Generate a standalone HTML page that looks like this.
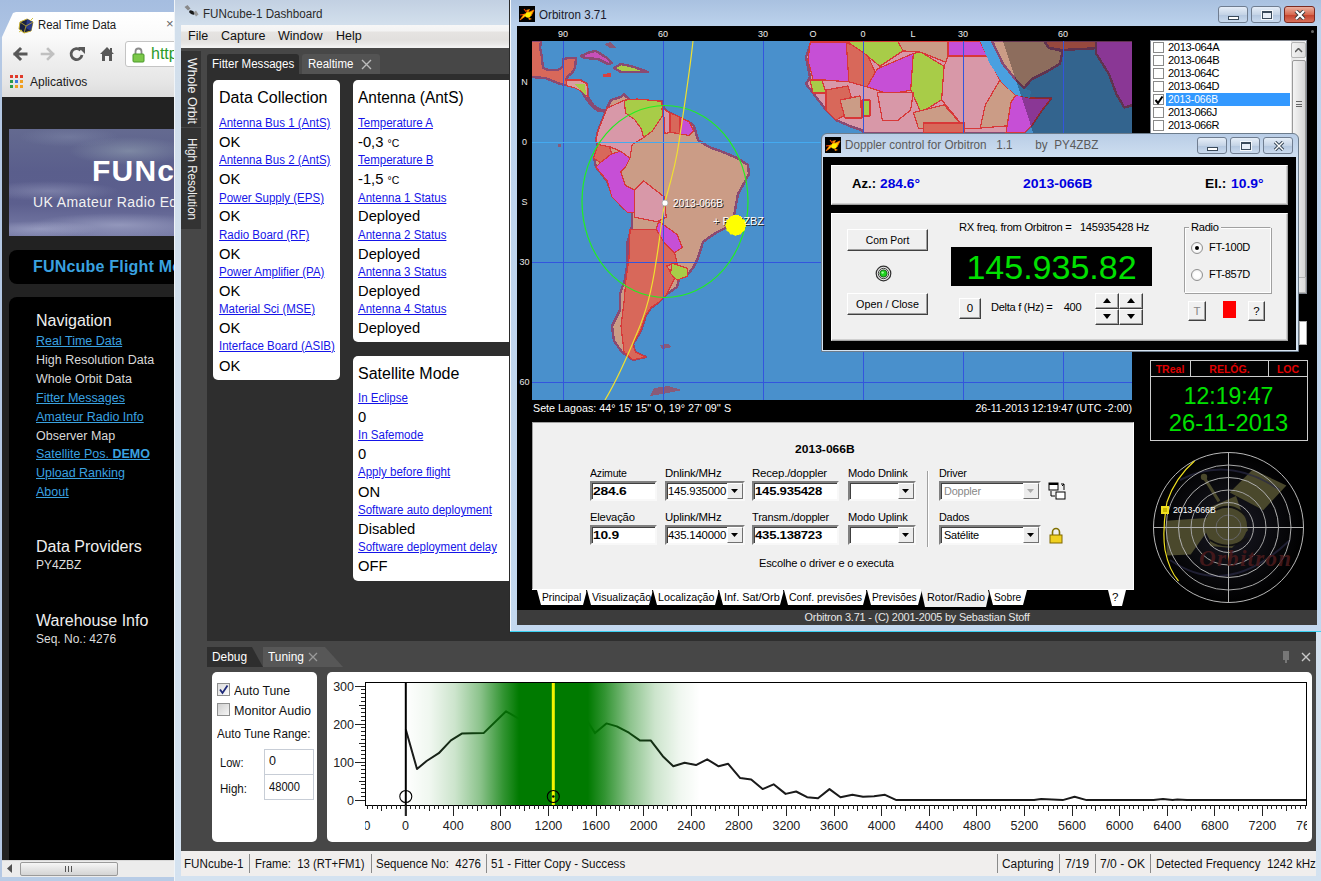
<!DOCTYPE html>
<html><head><meta charset="utf-8">
<style>
*{box-sizing:border-box;margin:0;padding:0}
html,body{width:1321px;height:881px;overflow:hidden;background:#a9c2e2;font-family:"Liberation Sans",sans-serif;position:relative}
.a{position:absolute}
.t{position:absolute;white-space:nowrap;line-height:1}
u{text-decoration:underline}
</style></head><body>

<!-- ============ CHROME ============ -->
<div class="a" style="left:0;top:0;width:174px;height:881px;background:linear-gradient(#a5bde0,#b4c9e6 60px,#c0d4ec)"></div>
<!-- tab + toolbar -->
<div class="a" style="left:2px;top:12px;width:172px;height:85px;background:linear-gradient(#ffffff 0,#fafafa 25px,#f0f0f0 45px,#e6e6e6 70px,#dcdcdc 85px);clip-path:polygon(0 25px,11px 1px,14px 0,100% 0,100% 100%,0 100%)"></div>
<div class="a" style="left:0;top:37px;width:2px;height:844px;background:#b4c8e4"></div>
<svg class="a" style="left:17px;top:16px" width="18" height="18"><polygon points="3,6 10,3 16,6 14,15 7,17 2,13" fill="#1a2240" stroke="#c8b030" stroke-width="1"/><polygon points="10,3 16,6 14,15 9,12" fill="#2a3a8a"/><path d="M3 6 L9 10 L16 6 M9 10 L7 17" stroke="#c8b030" stroke-width="0.8" fill="none"/><path d="M16 2 L13 5 M2 16 L5 14" stroke="#d0c040" stroke-width="1"/></svg>
<div class="t" style="left:38px;top:19px;font-size:12px;color:#1a1a1a;transform-origin:0 0;transform:scaleX(0.945)">Real Time Data</div>
<div class="t" style="left:166px;top:17px;font-size:13px;color:#666">×</div>
<svg class="a" style="left:11px;top:46px" width="17" height="16"><path d="M15 8 H4 M9 3 L4 8 L9 13" stroke="#585858" stroke-width="3" fill="none" stroke-linecap="square"/></svg>
<svg class="a" style="left:40px;top:46px" width="17" height="16"><path d="M2 8 H13 M8 3 L13 8 L8 13" stroke="#c0c0c0" stroke-width="2.6" fill="none" stroke-linecap="square"/></svg>
<svg class="a" style="left:69px;top:46px" width="17" height="17"><path d="M13 9 A5.5 5.5 0 1 1 11.5 4.2" stroke="#585858" stroke-width="2.8" fill="none"/><polygon points="9,1 16,1 16,8" fill="#585858"/></svg>
<svg class="a" style="left:99px;top:46px" width="16" height="16"><polygon points="8,1 15,8 13,8 13,15 10,15 10,10 6,10 6,15 3,15 3,8 1,8" fill="#585858"/><rect x="11" y="2" width="2" height="4" fill="#585858"/></svg>
<div class="a" style="left:125px;top:41px;width:60px;height:26px;background:#fff;border:1px solid #c4c4c4;border-radius:3px"></div>
<svg class="a" style="left:132px;top:46px" width="13" height="17"><path d="M3.5 8 V5.5 A3 3 0 0 1 9.5 5.5 V8" stroke="#8a8a8a" stroke-width="1.8" fill="none"/><rect x="1" y="8" width="11" height="8" rx="1" fill="#7cc84a" stroke="#4a9a2a" stroke-width="1"/></svg>
<div class="t" style="left:151px;top:46px;font-size:16px;color:#2a9a2a">http</div>
<svg class="a" style="left:10px;top:75px" width="14" height="14"><g><rect x="0" y="0" width="3" height="3" fill="#e03a2a"/><rect x="5" y="0" width="3" height="3" fill="#e03a2a"/><rect x="10" y="0" width="3" height="3" fill="#e03a2a"/><rect x="0" y="5" width="3" height="3" fill="#2a9a4a"/><rect x="5" y="5" width="3" height="3" fill="#3a7ae0"/><rect x="10" y="5" width="3" height="3" fill="#f0a020"/><rect x="0" y="10" width="3" height="3" fill="#2a9a4a"/><rect x="5" y="10" width="3" height="3" fill="#f0a020"/><rect x="10" y="10" width="3" height="3" fill="#f0a020"/></g></svg>
<div class="t" style="left:30px;top:76px;font-size:12px;color:#1a1a1a">Aplicativos</div>
<!-- content -->
<div class="a" style="left:2px;top:97px;width:172px;height:763px;background:#222"></div>
<div class="a" style="left:9px;top:129px;width:165px;height:107px;background:
 radial-gradient(ellipse 60px 14px at 120px 22px,rgba(150,165,180,0.55),transparent),
 radial-gradient(ellipse 50px 10px at 60px 8px,rgba(140,150,180,0.35),transparent),
 radial-gradient(ellipse 70px 10px at 40px 62px,rgba(170,175,205,0.4),transparent),
 radial-gradient(ellipse 90px 12px at 110px 96px,rgba(175,180,210,0.55),transparent),
 radial-gradient(ellipse 60px 8px at 30px 100px,rgba(180,185,215,0.5),transparent),
 linear-gradient(#646a90,#5a5e8c 40%,#5c5f8e 70%,#7a7ea8)"></div>
<div class="t" style="left:92px;top:156px;font-size:30px;font-weight:bold;color:#fff;letter-spacing:1.2px">FUNcube</div>
<div class="t" style="left:33px;top:195px;font-size:14px;color:#f2f2f2;letter-spacing:0.4px">UK Amateur Radio Educational</div>
<div class="a" style="left:9px;top:250px;width:175px;height:34px;background:#000;border-radius:8px"></div>
<div class="t" style="left:33px;top:259px;font-size:16px;font-weight:bold;color:#3aa2e0;letter-spacing:0.2px">FUNcube Flight Model</div>
<div class="a" style="left:9px;top:297px;width:175px;height:563px;background:#000;border-top-left-radius:8px"></div>
<div class="t" style="left:36px;top:313px;font-size:16px;color:#eee">Navigation</div>
<div style="position:absolute;left:36px;top:332px;font-size:12.5px;line-height:18.9px;color:#d8d8d8;white-space:nowrap">
  <div><u style="color:#3aa2e0">Real Time Data</u></div>
  <div>High Resolution Data</div>
  <div>Whole Orbit Data</div>
  <div><u style="color:#3aa2e0">Fitter Messages</u></div>
  <div><u style="color:#3aa2e0">Amateur Radio Info</u></div>
  <div>Observer Map</div>
  <div><u style="color:#3aa2e0">Satellite Pos. <b>DEMO</b></u></div>
  <div><u style="color:#3aa2e0">Upload Ranking</u></div>
  <div><u style="color:#3aa2e0">About</u></div>
</div>
<div class="t" style="left:36px;top:539px;font-size:16px;color:#eee">Data Providers</div>
<div class="t" style="left:36px;top:559px;font-size:12px;color:#ddd">PY4ZBZ</div>
<div class="t" style="left:36px;top:613px;font-size:16px;color:#eee">Warehouse Info</div>
<div class="t" style="left:36px;top:633px;font-size:12px;color:#ddd">Seq. No.: 4276</div>
<!-- scrollbar -->
<div class="a" style="left:2px;top:860px;width:172px;height:17px;background:#ececec;border-top:1px solid #d8d8d8"></div>
<svg class="a" style="left:7px;top:864px" width="6" height="9"><path d="M5 0 L0 4.5 L5 9 Z" fill="#505050"/></svg>
<div class="a" style="left:20px;top:862px;width:98px;height:14px;background:linear-gradient(#f6f6f6,#e4e4e4 50%,#d4d4d4);border:1px solid #9a9a9a;border-radius:2px"></div>
<div class="a" style="left:65px;top:866px;width:7px;height:6px;border-left:1px solid #555;border-right:1px solid #555"></div>
<div class="a" style="left:68px;top:866px;width:1px;height:6px;background:#555"></div>
<div class="a" style="left:0;top:877px;width:174px;height:4px;background:#b8cce6"></div>
<!-- ============ FUNCUBE ============ -->
<div class="a" id="fc" style="left:174px;top:0;width:1147px;height:881px;background:linear-gradient(#c2d0e2,#d2dfec 24px,#d4e2f0);border-left:1px solid #f0f4f8">
</div>
<div class="a" style="left:181px;top:25px;width:328px;height:23px;background:linear-gradient(#f7f7f7 0,#f3f3f3 6px,#e6e4e2 7px,#e2e0de 15px,#e8e7e6 19px,#f2f2f2 22px)"></div>
<div class="a" style="left:183px;top:5px;width:16px;height:14px">
 <svg width="16" height="14"><polygon points="1.5,2 4.5,0 7.5,3.5 5,5.5" fill="#888"/><ellipse cx="9" cy="7.5" rx="3.2" ry="1.8" transform="rotate(30 9 7.5)" fill="#1a1a1a"/><polygon points="10.5,7.5 13,5.5 15.5,9.5 13,11.5" fill="#999"/></svg>
</div>
<div class="t" style="left:203px;top:8px;font-size:12.5px;color:#2a2a2a;transform-origin:0 0;transform:scaleX(0.93)">FUNcube-1 Dashboard</div>
<div class="t" style="left:188px;top:30px;font-size:12.5px;color:#111">File</div>
<div class="t" style="left:221px;top:30px;font-size:12.5px;color:#111">Capture</div>
<div class="t" style="left:278px;top:30px;font-size:12.5px;color:#111">Window</div>
<div class="t" style="left:336px;top:30px;font-size:12.5px;color:#111">Help</div>
<!-- main dark -->
<div class="a" style="left:181px;top:48px;width:1135px;height:803px;background:#474747"></div>
<div class="a" style="left:207px;top:74px;width:1109px;height:567px;background:#2e2e2e"></div>
<div class="a" style="left:181px;top:51px;width:20px;height:76px;background:#333"></div>
<div class="a" style="left:181px;top:128px;width:20px;height:101px;background:#333"></div>
<div class="t" style="left:198px;top:58px;font-size:12.5px;color:#f0f0f0;transform-origin:0 0;transform:rotate(90deg)">Whole Orbit</div>
<div class="t" style="left:198px;top:138px;font-size:12.5px;color:#f0f0f0;transform-origin:0 0;transform:rotate(90deg) scaleX(0.93)">High Resolution</div>
<!-- doc tabs -->
<div class="a" style="left:207px;top:54px;width:92px;height:20px;background:#2e2e2e;border-radius:3px 3px 0 0"></div>
<div class="a" style="left:302px;top:54px;width:78px;height:20px;background:#535353;border-radius:3px 3px 0 0"></div>
<div class="t" style="left:212px;top:58px;font-size:12.5px;color:#fff;transform-origin:0 0;transform:scaleX(0.925)">Fitter Messages</div>
<div class="t" style="left:308px;top:58px;font-size:12.5px;color:#fff;transform-origin:0 0;transform:scaleX(0.92)">Realtime</div>
<svg class="a" style="left:361px;top:59px" width="11" height="11"><path d="M1 1 L10 10 M10 1 L1 10" stroke="#bbb" stroke-width="1.4"/></svg>
<!-- cards -->
<div class="a" style="left:213px;top:80px;width:127px;height:300px;background:#fff;border-radius:5px"></div>
<div class="a" style="left:353px;top:80px;width:156px;height:262px;background:#fff;border-radius:5px 0 0 5px"></div>
<div class="a" style="left:353px;top:356px;width:156px;height:225px;background:#fff;border-radius:5px 0 0 5px"></div>
<div class="t" style="left:219px;top:90px;font-size:16px;color:#000;">Data Collection</div>
<div class="t" style="left:358px;top:90px;font-size:16px;color:#000;transform-origin:0 0;transform:scaleX(0.965)">Antenna (AntS)</div>
<div class="t" style="left:358px;top:366px;font-size:16px;color:#000;">Satellite Mode</div>
<div class="t" style="left:219px;top:117px;font-size:12px;color:#1515e8;transform-origin:0 0;transform:scaleX(0.96)"><u>Antenna Bus 1 (AntS)</u></div>
<div class="t" style="left:219px;top:134px;font-size:15.5px;color:#000;transform-origin:0 0;transform:scaleX(0.95)">OK</div>
<div class="t" style="left:219px;top:154px;font-size:12px;color:#1515e8;transform-origin:0 0;transform:scaleX(0.96)"><u>Antenna Bus 2 (AntS)</u></div>
<div class="t" style="left:219px;top:171px;font-size:15.5px;color:#000;transform-origin:0 0;transform:scaleX(0.95)">OK</div>
<div class="t" style="left:219px;top:192px;font-size:12px;color:#1515e8;transform-origin:0 0;transform:scaleX(0.96)"><u>Power Supply (EPS)</u></div>
<div class="t" style="left:219px;top:208px;font-size:15.5px;color:#000;transform-origin:0 0;transform:scaleX(0.95)">OK</div>
<div class="t" style="left:219px;top:229px;font-size:12px;color:#1515e8;transform-origin:0 0;transform:scaleX(0.96)"><u>Radio Board (RF)</u></div>
<div class="t" style="left:219px;top:246px;font-size:15.5px;color:#000;transform-origin:0 0;transform:scaleX(0.95)">OK</div>
<div class="t" style="left:219px;top:266px;font-size:12px;color:#1515e8;transform-origin:0 0;transform:scaleX(0.96)"><u>Power Amplifier (PA)</u></div>
<div class="t" style="left:219px;top:283px;font-size:15.5px;color:#000;transform-origin:0 0;transform:scaleX(0.95)">OK</div>
<div class="t" style="left:219px;top:303px;font-size:12px;color:#1515e8;transform-origin:0 0;transform:scaleX(0.96)"><u>Material Sci (MSE)</u></div>
<div class="t" style="left:219px;top:320px;font-size:15.5px;color:#000;transform-origin:0 0;transform:scaleX(0.95)">OK</div>
<div class="t" style="left:219px;top:340px;font-size:12px;color:#1515e8;transform-origin:0 0;transform:scaleX(0.96)"><u>Interface Board (ASIB)</u></div>
<div class="t" style="left:219px;top:358px;font-size:15.5px;color:#000;transform-origin:0 0;transform:scaleX(0.95)">OK</div>
<div class="t" style="left:358px;top:117px;font-size:12px;color:#1515e8;transform-origin:0 0;transform:scaleX(0.96)"><u>Temperature A</u></div>
<div class="t" style="left:358px;top:134px;font-size:15.5px;color:#000;transform-origin:0 0;transform:scaleX(0.95)">-0,3 <span style='font-size:11px'>°C</span></div>
<div class="t" style="left:358px;top:154px;font-size:12px;color:#1515e8;transform-origin:0 0;transform:scaleX(0.96)"><u>Temperature B</u></div>
<div class="t" style="left:358px;top:171px;font-size:15.5px;color:#000;transform-origin:0 0;transform:scaleX(0.95)">-1,5 <span style='font-size:11px'>°C</span></div>
<div class="t" style="left:358px;top:192px;font-size:12px;color:#1515e8;transform-origin:0 0;transform:scaleX(0.96)"><u>Antenna 1 Status</u></div>
<div class="t" style="left:358px;top:208px;font-size:15.5px;color:#000;transform-origin:0 0;transform:scaleX(0.95)">Deployed</div>
<div class="t" style="left:358px;top:229px;font-size:12px;color:#1515e8;transform-origin:0 0;transform:scaleX(0.96)"><u>Antenna 2 Status</u></div>
<div class="t" style="left:358px;top:246px;font-size:15.5px;color:#000;transform-origin:0 0;transform:scaleX(0.95)">Deployed</div>
<div class="t" style="left:358px;top:266px;font-size:12px;color:#1515e8;transform-origin:0 0;transform:scaleX(0.96)"><u>Antenna 3 Status</u></div>
<div class="t" style="left:358px;top:283px;font-size:15.5px;color:#000;transform-origin:0 0;transform:scaleX(0.95)">Deployed</div>
<div class="t" style="left:358px;top:303px;font-size:12px;color:#1515e8;transform-origin:0 0;transform:scaleX(0.96)"><u>Antenna 4 Status</u></div>
<div class="t" style="left:358px;top:320px;font-size:15.5px;color:#000;transform-origin:0 0;transform:scaleX(0.95)">Deployed</div>
<div class="t" style="left:358px;top:392px;font-size:12px;color:#1515e8;transform-origin:0 0;transform:scaleX(0.96)"><u>In Eclipse</u></div>
<div class="t" style="left:358px;top:409px;font-size:15.5px;color:#000;transform-origin:0 0;transform:scaleX(0.95)">0</div>
<div class="t" style="left:358px;top:429px;font-size:12px;color:#1515e8;transform-origin:0 0;transform:scaleX(0.96)"><u>In Safemode</u></div>
<div class="t" style="left:358px;top:446px;font-size:15.5px;color:#000;transform-origin:0 0;transform:scaleX(0.95)">0</div>
<div class="t" style="left:358px;top:466px;font-size:12px;color:#1515e8;transform-origin:0 0;transform:scaleX(0.96)"><u>Apply before flight</u></div>
<div class="t" style="left:358px;top:484px;font-size:15.5px;color:#000;transform-origin:0 0;transform:scaleX(0.95)">ON</div>
<div class="t" style="left:358px;top:504px;font-size:12px;color:#1515e8;transform-origin:0 0;transform:scaleX(0.96)"><u>Software auto deployment</u></div>
<div class="t" style="left:358px;top:521px;font-size:15.5px;color:#000;transform-origin:0 0;transform:scaleX(0.95)">Disabled</div>
<div class="t" style="left:358px;top:541px;font-size:12px;color:#1515e8;transform-origin:0 0;transform:scaleX(0.96)"><u>Software deployment delay</u></div>
<div class="t" style="left:358px;top:558px;font-size:15.5px;color:#000;transform-origin:0 0;transform:scaleX(0.95)">OFF</div>
<!-- tuning panel -->

<div class="a" style="left:207px;top:647px;width:56px;height:20px;background:#2e2e2e;clip-path:polygon(0 0,45px 0,100% 100%,0 100%)"></div>
<div class="a" style="left:263px;top:647px;width:80px;height:20px;background:#575757;clip-path:polygon(0 0,62px 0,100% 100%,0 100%)"></div>
<div class="t" style="left:212px;top:651px;font-size:12.5px;color:#fff;transform-origin:0 0;transform:scaleX(0.950)">Debug</div>
<div class="t" style="left:268px;top:651px;font-size:12.5px;color:#fff;transform-origin:0 0;transform:scaleX(0.953)">Tuning</div>
<svg class="a" style="left:308px;top:652px" width="10" height="10"><path d="M1 1 L9 9 M9 1 L1 9" stroke="#9a9a9a" stroke-width="1.3"/></svg>
<div class="a" style="left:1283px;top:651px;width:6px;height:9px;background:#777"></div>
<div class="a" style="left:1285px;top:659px;width:2px;height:4px;background:#777"></div>
<svg class="a" style="left:1301px;top:652px" width="10" height="10"><path d="M1 1 L9 9 M9 1 L1 9" stroke="#c8c8c8" stroke-width="1.4"/></svg>
<div class="a" style="left:212px;top:672px;width:105px;height:170px;background:#fff;border-radius:5px"></div>
<div class="a" style="left:327px;top:672px;width:985px;height:170px;background:#fff;border-radius:5px"></div>
<div class="a" style="left:217px;top:683px;width:13px;height:13px;border:1px solid #8e8f8f;background:linear-gradient(135deg,#dcdcdc,#fafafa)"><svg width="11" height="11" style="position:absolute;left:0;top:0"><path d="M2 5.5 L4.5 9 L9.5 1.5" stroke="#1e2a7a" stroke-width="1.8" fill="none"/></svg></div>
<div class="a" style="left:217px;top:703px;width:13px;height:13px;border:1px solid #8e8f8f;background:linear-gradient(135deg,#cfcfcf,#f6f6f6)"></div>
<div class="t" style="left:234px;top:685px;font-size:12.5px;color:#111;transform-origin:0 0;transform:scaleX(0.982)">Auto Tune</div>
<div class="t" style="left:234px;top:705px;font-size:12.5px;color:#111;transform-origin:0 0;transform:scaleX(1.007)">Monitor Audio</div>
<div class="t" style="left:217px;top:728px;font-size:12.5px;color:#111;transform-origin:0 0;transform:scaleX(0.928)">Auto Tune Range:</div>
<div class="t" style="left:220px;top:757px;font-size:12.5px;color:#111;transform-origin:0 0;transform:scaleX(0.890)">Low:</div>
<div class="t" style="left:220px;top:783px;font-size:12.5px;color:#111;transform-origin:0 0;transform:scaleX(0.925)">High:</div>
<div class="a" style="left:264px;top:749px;width:50px;height:26px;border:1px solid #c7cdd6;background:#fff"></div>
<div class="a" style="left:264px;top:774px;width:50px;height:26px;border:1px solid #c7cdd6;background:#fff"></div>
<div class="t" style="left:269px;top:755px;font-size:12.5px;color:#111;">0</div>
<div class="t" style="left:269px;top:781px;font-size:12.5px;color:#111;transform-origin:0 0;transform:scaleX(0.892)">48000</div>
<!--CHART-->
<svg class="a" style="left:326px;top:672px" width="986" height="170" viewBox="326 672 986 170">
<defs><linearGradient id="gg" gradientUnits="userSpaceOnUse" x1="405" y1="0" x2="700" y2="0">
<stop offset="0.0000" stop-color="#007a00" stop-opacity="0"/>
<stop offset="0.0847" stop-color="#007a00" stop-opacity="0.06"/>
<stop offset="0.1695" stop-color="#007a00" stop-opacity="0.2"/>
<stop offset="0.2542" stop-color="#007a00" stop-opacity="0.45"/>
<stop offset="0.3322" stop-color="#007a00" stop-opacity="0.8"/>
<stop offset="0.3864" stop-color="#007a00" stop-opacity="1"/>
<stop offset="0.6203" stop-color="#007a00" stop-opacity="1"/>
<stop offset="0.6780" stop-color="#007a00" stop-opacity="0.8"/>
<stop offset="0.7627" stop-color="#007a00" stop-opacity="0.45"/>
<stop offset="0.8475" stop-color="#007a00" stop-opacity="0.2"/>
<stop offset="0.9322" stop-color="#007a00" stop-opacity="0.06"/>
<stop offset="1.0000" stop-color="#007a00" stop-opacity="0"/>
</linearGradient><clipPath id="pc"><rect x="366" y="683" width="940" height="122"/></clipPath></defs>
<rect x="365.5" y="682.5" width="941" height="123" fill="#fff" stroke="#000" stroke-width="1"/>
<g clip-path="url(#pc)">
<polyline points="405.8,729.5 417,769 426.6,761 438.8,753.2 450.9,740.4 461.8,733.6 483.6,733.1 506.1,711.3 518.7,718.6 530,722 541,728 553,725 565,715 576,712 586.5,719.8 595,733.1 606.4,723.4 616.8,726.4 628.9,732.7 639.8,740.4 650.7,740.4 662.8,756.2 673.3,766.3 684.6,762.7 696,765.1 707.2,759.3 718.6,766.3 728.2,763.8 740.2,778.1 751.2,779.5 762.6,789.1 773.6,784.3 785.6,793.9 796.1,791.5 807.1,797.2 818,798.2 829.5,789.1 840.5,797.2 852.4,794.8 863,796.7 874,796.3 885,794.8 896.4,800.1 1034,800.1 1041.2,799.1 1062.7,800.1 1074.6,796.7 1086.6,800.1 1153.5,800.1 1163,799.1 1172.6,800.1 1177.4,799.6 1187,800.1 1306,800.1" fill="none" stroke="#1a1a1a" stroke-width="2" stroke-linejoin="round"/>
<rect x="405" y="683" width="295" height="122" fill="url(#gg)"/>
<line x1="405.8" y1="683" x2="405.8" y2="805" stroke="#000" stroke-width="2"/>
<line x1="553.3" y1="683" x2="553.3" y2="805" stroke="#f4f400" stroke-width="3"/>
<circle cx="405.8" cy="796.5" r="6" fill="none" stroke="#000" stroke-width="1.1"/>
<circle cx="553.3" cy="796.5" r="6" fill="none" stroke="#000" stroke-width="1.1"/>
<circle cx="553.3" cy="796.5" r="1.3" fill="#000"/>
</g>
<line x1="405.8" y1="805" x2="405.8" y2="816" stroke="#000" stroke-width="2"/>
<path d="M355 800.0H365 M361 796.2H365 M361 792.4H365 M361 788.6H365 M361 784.8H365 M359 781.0H365 M361 777.2H365 M361 773.4H365 M361 769.6H365 M361 765.8H365 M355 762.0H365 M361 758.2H365 M361 754.4H365 M361 750.6H365 M361 746.8H365 M359 743.0H365 M361 739.2H365 M361 735.4H365 M361 731.6H365 M361 727.8H365 M355 724.0H365 M361 720.2H365 M361 716.4H365 M361 712.6H365 M361 708.8H365 M359 705.0H365 M361 701.2H365 M361 697.4H365 M361 693.6H365 M361 689.8H365 M355 686.0H365 M367.5 805V809 M372.3 805V809 M377.0 805V809 M381.8 805V811 M386.6 805V809 M391.3 805V809 M396.1 805V809 M400.8 805V809 M405.6 805V816 M410.4 805V809 M415.1 805V809 M419.9 805V809 M424.6 805V809 M429.4 805V811 M434.2 805V809 M438.9 805V809 M443.7 805V809 M448.4 805V809 M453.2 805V816 M458.0 805V809 M462.7 805V809 M467.5 805V809 M472.2 805V809 M477.0 805V811 M481.8 805V809 M486.5 805V809 M491.3 805V809 M496.0 805V809 M500.8 805V816 M505.6 805V809 M510.3 805V809 M515.1 805V809 M519.8 805V809 M524.6 805V811 M529.4 805V809 M534.1 805V809 M538.9 805V809 M543.6 805V809 M548.4 805V816 M553.2 805V809 M557.9 805V809 M562.7 805V809 M567.4 805V809 M572.2 805V811 M577.0 805V809 M581.7 805V809 M586.5 805V809 M591.2 805V809 M596.0 805V816 M600.8 805V809 M605.5 805V809 M610.3 805V809 M615.0 805V809 M619.8 805V811 M624.6 805V809 M629.3 805V809 M634.1 805V809 M638.8 805V809 M643.6 805V816 M648.4 805V809 M653.1 805V809 M657.9 805V809 M662.6 805V809 M667.4 805V811 M672.2 805V809 M676.9 805V809 M681.7 805V809 M686.4 805V809 M691.2 805V816 M696.0 805V809 M700.7 805V809 M705.5 805V809 M710.2 805V809 M715.0 805V811 M719.8 805V809 M724.5 805V809 M729.3 805V809 M734.0 805V809 M738.8 805V816 M743.6 805V809 M748.3 805V809 M753.1 805V809 M757.8 805V809 M762.6 805V811 M767.4 805V809 M772.1 805V809 M776.9 805V809 M781.6 805V809 M786.4 805V816 M791.2 805V809 M795.9 805V809 M800.7 805V809 M805.4 805V809 M810.2 805V811 M815.0 805V809 M819.7 805V809 M824.5 805V809 M829.2 805V809 M834.0 805V816 M838.8 805V809 M843.5 805V809 M848.3 805V809 M853.0 805V809 M857.8 805V811 M862.6 805V809 M867.3 805V809 M872.1 805V809 M876.8 805V809 M881.6 805V816 M886.4 805V809 M891.1 805V809 M895.9 805V809 M900.6 805V809 M905.4 805V811 M910.2 805V809 M914.9 805V809 M919.7 805V809 M924.4 805V809 M929.2 805V816 M934.0 805V809 M938.7 805V809 M943.5 805V809 M948.2 805V809 M953.0 805V811 M957.8 805V809 M962.5 805V809 M967.3 805V809 M972.0 805V809 M976.8 805V816 M981.6 805V809 M986.3 805V809 M991.1 805V809 M995.8 805V809 M1000.6 805V811 M1005.4 805V809 M1010.1 805V809 M1014.9 805V809 M1019.6 805V809 M1024.4 805V816 M1029.2 805V809 M1033.9 805V809 M1038.7 805V809 M1043.4 805V809 M1048.2 805V811 M1053.0 805V809 M1057.7 805V809 M1062.5 805V809 M1067.2 805V809 M1072.0 805V816 M1076.8 805V809 M1081.5 805V809 M1086.3 805V809 M1091.0 805V809 M1095.8 805V811 M1100.6 805V809 M1105.3 805V809 M1110.1 805V809 M1114.8 805V809 M1119.6 805V816 M1124.4 805V809 M1129.1 805V809 M1133.9 805V809 M1138.6 805V809 M1143.4 805V811 M1148.2 805V809 M1152.9 805V809 M1157.7 805V809 M1162.4 805V809 M1167.2 805V816 M1172.0 805V809 M1176.7 805V809 M1181.5 805V809 M1186.2 805V809 M1191.0 805V811 M1195.8 805V809 M1200.5 805V809 M1205.3 805V809 M1210.0 805V809 M1214.8 805V816 M1219.6 805V809 M1224.3 805V809 M1229.1 805V809 M1233.8 805V809 M1238.6 805V811 M1243.4 805V809 M1248.1 805V809 M1252.9 805V809 M1257.6 805V809 M1262.4 805V816 M1267.2 805V809 M1271.9 805V809 M1276.7 805V809 M1281.4 805V809 M1286.2 805V811 M1291.0 805V809 M1295.7 805V809 M1300.5 805V809 M1305.2 805V809" stroke="#222" stroke-width="1" shape-rendering="crispEdges"/>
</svg>
<div class="t" style="left:323px;top:681px;width:31px;text-align:right;font-size:12.5px;color:#222">300</div>
<div class="t" style="left:323px;top:719px;width:31px;text-align:right;font-size:12.5px;color:#222">200</div>
<div class="t" style="left:323px;top:757px;width:31px;text-align:right;font-size:12.5px;color:#222">100</div>
<div class="t" style="left:323px;top:795px;width:31px;text-align:right;font-size:12.5px;color:#222">0</div>
<div class="a" style="left:365px;top:814px;width:942px;height:22px;overflow:hidden">
<div class="t" style="left:-32.0px;top:6px;width:50px;text-align:center;font-size:12.5px;color:#222">-400</div>
<div class="t" style="left:15.6px;top:6px;width:50px;text-align:center;font-size:12.5px;color:#222">0</div>
<div class="t" style="left:63.2px;top:6px;width:50px;text-align:center;font-size:12.5px;color:#222">400</div>
<div class="t" style="left:110.8px;top:6px;width:50px;text-align:center;font-size:12.5px;color:#222">800</div>
<div class="t" style="left:158.4px;top:6px;width:50px;text-align:center;font-size:12.5px;color:#222">1200</div>
<div class="t" style="left:206.0px;top:6px;width:50px;text-align:center;font-size:12.5px;color:#222">1600</div>
<div class="t" style="left:253.6px;top:6px;width:50px;text-align:center;font-size:12.5px;color:#222">2000</div>
<div class="t" style="left:301.2px;top:6px;width:50px;text-align:center;font-size:12.5px;color:#222">2400</div>
<div class="t" style="left:348.8px;top:6px;width:50px;text-align:center;font-size:12.5px;color:#222">2800</div>
<div class="t" style="left:396.4px;top:6px;width:50px;text-align:center;font-size:12.5px;color:#222">3200</div>
<div class="t" style="left:444.0px;top:6px;width:50px;text-align:center;font-size:12.5px;color:#222">3600</div>
<div class="t" style="left:491.6px;top:6px;width:50px;text-align:center;font-size:12.5px;color:#222">4000</div>
<div class="t" style="left:539.2px;top:6px;width:50px;text-align:center;font-size:12.5px;color:#222">4400</div>
<div class="t" style="left:586.8px;top:6px;width:50px;text-align:center;font-size:12.5px;color:#222">4800</div>
<div class="t" style="left:634.4px;top:6px;width:50px;text-align:center;font-size:12.5px;color:#222">5200</div>
<div class="t" style="left:682.0px;top:6px;width:50px;text-align:center;font-size:12.5px;color:#222">5600</div>
<div class="t" style="left:729.6px;top:6px;width:50px;text-align:center;font-size:12.5px;color:#222">6000</div>
<div class="t" style="left:777.2px;top:6px;width:50px;text-align:center;font-size:12.5px;color:#222">6400</div>
<div class="t" style="left:824.8px;top:6px;width:50px;text-align:center;font-size:12.5px;color:#222">6800</div>
<div class="t" style="left:872.4px;top:6px;width:50px;text-align:center;font-size:12.5px;color:#222">7200</div>
<div class="t" style="left:920.0px;top:6px;width:50px;text-align:center;font-size:12.5px;color:#222">7600</div>
</div>
<!--/CHART-->
<!-- status bar -->
<div class="a" style="left:181px;top:851px;width:1135px;height:25px;background:#f0eeed"></div>
<div class="t" style="left:184px;top:858px;font-size:12.5px;color:#111;transform-origin:0 0;transform:scaleX(0.932)">FUNcube-1</div>
<div class="t" style="left:255px;top:858px;font-size:12.5px;color:#111;transform-origin:0 0;transform:scaleX(0.906)">Frame:&nbsp; 13 (RT+FM1)</div>
<div class="t" style="left:376px;top:858px;font-size:12.5px;color:#111;transform-origin:0 0;transform:scaleX(0.921)">Sequence No:&nbsp; 4276</div>
<div class="t" style="left:491px;top:858px;font-size:12.5px;color:#111;transform-origin:0 0;transform:scaleX(0.929)">51 - Fitter Copy - Success</div>
<div class="t" style="left:1002px;top:858px;font-size:12.5px;color:#111;transform-origin:0 0;transform:scaleX(0.950)">Capturing</div>
<div class="t" style="left:1065px;top:858px;font-size:12.5px;color:#111;transform-origin:0 0;transform:scaleX(0.986)">7/19</div>
<div class="t" style="left:1100px;top:858px;font-size:12.5px;color:#111;transform-origin:0 0;transform:scaleX(0.967)">7/0 - OK</div>
<div class="t" style="left:1156px;top:858px;font-size:12.5px;color:#111;transform-origin:0 0;transform:scaleX(0.928)">Detected Frequency&nbsp; 1242 kHz</div>
<div class="a" style="left:249px;top:854px;width:1px;height:19px;background:#8a8a8a"></div>
<div class="a" style="left:371px;top:854px;width:1px;height:19px;background:#8a8a8a"></div>
<div class="a" style="left:486px;top:854px;width:1px;height:19px;background:#8a8a8a"></div>
<div class="a" style="left:997px;top:854px;width:1px;height:19px;background:#8a8a8a"></div>
<div class="a" style="left:1059px;top:854px;width:1px;height:19px;background:#8a8a8a"></div>
<div class="a" style="left:1095px;top:854px;width:1px;height:19px;background:#8a8a8a"></div>
<div class="a" style="left:1150px;top:854px;width:1px;height:19px;background:#8a8a8a"></div>

<!-- ============ ORBITRON ============ -->
<!--ORB-->
<div class="a" id="orb" style="left:510px;top:0;width:811px;height:632px;background:linear-gradient(#a9c1e0,#bcd2ec 26px,#c3d8ef)"></div><div class="a" style="left:509px;top:0;width:1px;height:633px;background:#2a2a2a"></div><div class="a" style="left:510px;top:0;width:1px;height:632px;background:#f4f8fc"></div>
<div class="a" style="left:519px;top:6px;width:16px;height:16px;background:#000"><svg width="16" height="16"><path d="M5 3 L9 8 M1 9 L8 8" stroke="#ff4400" stroke-width="1.2"/><polygon points="8,7 15,4 12,10" fill="#ffcc00" stroke="#ff6600" stroke-width="0.8"/><polygon points="8,9 1,14 5,8" fill="#ffdd00" stroke="#ff6600" stroke-width="0.8"/><polygon points="7,4 11,3 9,7" fill="#ff8800"/><circle cx="9" cy="9" r="2.8" fill="#ffee00"/><polygon points="9,11 13,13 10,14" fill="#ff8800"/></svg></div>
<div class="t" style="left:539px;top:9px;font-size:12.5px;color:#1a1a2a;transform-origin:0 0;transform:scaleX(0.929)">Orbitron 3.71</div>
<div class="a" style="left:1218px;top:6px;width:30px;height:17px;border:1px solid #6f7d90;border-radius:3px;background:linear-gradient(#e6eef8,#c5d4e6 50%,#b3c6de 51%,#c9daee)"><div class="a" style="left:9px;top:9px;width:11px;height:4px;background:#fff;border:1px solid #3a4a5a"></div></div>
<div class="a" style="left:1251px;top:6px;width:30px;height:17px;border:1px solid #6f7d90;border-radius:3px;background:linear-gradient(#e6eef8,#c5d4e6 50%,#b3c6de 51%,#c9daee)"><div class="a" style="left:10px;top:4px;width:10px;height:8px;border:1.5px solid #3a4a5a;border-top-width:2.5px;background:#e8eef6;box-shadow:0 0 0 1px #f4f8fc"></div></div>
<div class="a" style="left:1284px;top:6px;width:31px;height:17px;border:1px solid #7a2a20;border-radius:3px;background:linear-gradient(#eab0a0,#d86a50 50%,#c3402a 51%,#d8705a)"><svg class="a" style="left:8px;top:3px" width="14" height="10"><path d="M3 1 L11 9 M11 1 L3 9" stroke="#3a3a3a" stroke-width="4"/><path d="M3 1 L11 9 M11 1 L3 9" stroke="#fff" stroke-width="2.2"/></svg></div>
<div class="a" style="left:517px;top:26px;width:800px;height:599px;background:#000"></div><div class="a" style="left:510px;top:631px;width:811px;height:1px;background:#3ad0f0"></div>
<svg class="a" style="left:532px;top:41px" width="600" height="359" viewBox="532 41 600 359" shape-rendering="crispEdges">
<rect x="532" y="41" width="600" height="359" fill="#4990cc"/>
<polygon points="531.0,41.0 541.0,41.0 540.0,48.0 541.5,54.5 543.0,68.0 548.0,70.0 558.0,70.0 563.0,66.6 563.0,59.4 567.5,58.0 576.0,58.0 575.0,68.0 572.0,73.0 568.0,76.0 566.0,80.0 580.0,80.0 587.0,84.0 588.0,97.0 594.0,106.0 605.0,112.0 608.0,107.0 611.0,100.0 607.0,110.0 598.0,111.0 591.0,105.0 585.0,97.0 581.0,90.0 572.0,86.0 560.0,84.0 545.0,78.0 531.0,77.0" fill="#d8685a" stroke="#8a4a72" stroke-width="2.4" stroke-linejoin="round"/>
<polygon points="566.0,80.0 580.0,80.0 587.0,84.0 588.0,97.0 583.0,92.0 575.0,88.0 567.0,86.0" fill="#d8a0a0" stroke="#d83838" stroke-width="1.2" stroke-linejoin="round"/>
<polygon points="575.0,84.0 585.0,84.0 586.0,96.0 580.0,90.0" fill="#a8cc48"/>
<polygon points="581.0,56.0 590.0,52.0 596.0,51.0 607.0,58.0 612.0,63.0 608.0,64.0 598.0,59.0 585.0,58.0" fill="#c850b8" stroke="#8a4a72" stroke-width="2.4" stroke-linejoin="round"/>
<polygon points="614.0,68.0 621.0,64.0 634.0,67.0 648.0,72.0 637.0,72.0 621.0,72.0" fill="#a8cc48" stroke="#8a4a72" stroke-width="2.4" stroke-linejoin="round"/>
<polygon points="604.0,44.0 610.0,42.0 616.0,48.0 610.0,48.0" fill="#8a5a78"/>
<polygon points="603.0,74.0 611.0,73.0 611.0,77.0 603.0,77.0" fill="#d84040"/>
<polygon points="607.0,108.0 611.0,100.0 621.0,97.0 624.0,94.5 630.0,100.0 648.0,101.0 662.0,101.0 665.0,110.0 678.0,117.0 689.0,122.0 694.0,126.0 698.0,140.0 709.0,147.0 723.0,152.0 737.0,158.0 748.0,165.0 749.0,174.0 743.0,185.0 738.0,194.0 736.0,205.0 734.0,216.0 727.0,227.0 714.0,234.0 703.0,242.0 698.0,258.0 693.0,268.0 688.0,274.0 680.0,276.0 677.0,287.0 667.0,294.0 659.0,302.0 651.0,308.0 646.0,315.0 641.0,331.0 633.0,344.0 635.0,352.0 646.0,357.0 633.0,360.0 622.0,352.0 614.0,341.0 612.0,326.0 620.0,310.0 620.0,294.0 625.0,279.0 627.5,263.0 627.5,242.0 632.0,226.0 632.0,212.0 623.0,208.0 612.0,194.0 607.0,181.0 596.0,167.0 594.0,158.0 598.0,147.0 596.0,140.0 598.0,131.0" fill="#cb9c86" stroke="#8a4a72" stroke-width="2.4" stroke-linejoin="round"/>
<polygon points="624.3,100.2 636.7,99.0 661.7,101.3 662.9,115.0 652.6,130.8 643.6,137.7 641.3,128.6 634.5,119.5 625.4,112.7" fill="#a8cc48" stroke="#d83838" stroke-width="1.2" stroke-linejoin="round"/>
<polygon points="607.2,108.1 624.3,100.2 625.4,112.7 634.5,119.5 641.3,128.6 643.6,137.7 632.2,144.5 629.9,158.1 620.8,151.3 609.5,146.7 598.1,144.5 595.9,139.9 598.1,130.8" fill="#d898a8" stroke="#d83838" stroke-width="1.2" stroke-linejoin="round"/>
<polygon points="598.0,144.5 609.5,146.7 611.8,153.6 600.4,162.6 593.6,158.1" fill="#d8685a" stroke="#d83838" stroke-width="1.2" stroke-linejoin="round"/>
<polygon points="600.4,162.6 611.8,153.6 620.8,151.3 629.9,158.1 625.4,167.2 620.8,171.7 625.4,185.4 634.5,189.9 634.5,212.6 627.7,212.6 611.8,196.7 607.2,180.8 595.9,167.2" fill="#c64fd6" stroke="#d83838" stroke-width="1.2" stroke-linejoin="round"/>
<polygon points="634.5,189.9 643.6,180.8 664.0,196.7 666.3,217.2 657.2,221.7 634.5,217.2" fill="#d898a8" stroke="#d83838" stroke-width="1.2" stroke-linejoin="round"/>
<polygon points="661.7,108.1 670.0,113.0 670.0,132.0 665.0,134.0 664.0,117.0" fill="#d898a8" stroke="#d83838" stroke-width="1.2" stroke-linejoin="round"/>
<polygon points="670.0,113.0 680.0,117.0 680.0,134.0 670.0,132.0" fill="#d8685a" stroke="#d83838" stroke-width="1.2" stroke-linejoin="round"/>
<polygon points="680.0,117.0 689.0,121.8 693.5,130.8 689.0,135.4 680.0,134.0" fill="#c64fd6" stroke="#d83838" stroke-width="1.2" stroke-linejoin="round"/>
<polygon points="658.8,221.3 677.1,234.4 682.3,247.4 674.5,252.7 664.0,242.2 656.2,229.2" fill="#c64fd6" stroke="#d83838" stroke-width="1.2" stroke-linejoin="round"/>
<polygon points="630.1,229.2 656.2,229.2 664.0,242.2 674.5,252.7 677.1,263.1 666.7,265.7 674.5,278.8 666.7,294.4 658.8,302.3 651.0,307.5 645.8,315.3 640.5,331.0 632.7,344.0 635.3,351.9 645.8,357.1 632.7,359.7 624.0,352.0 621.0,326.0 624.0,302.0 626.0,279.0 629.0,258.0" fill="#d8685a" stroke="#d83838" stroke-width="1.2" stroke-linejoin="round"/>
<polygon points="671.9,263.1 687.5,268.3 687.5,276.2 677.1,280.1 670.6,273.6" fill="#a8cc48" stroke="#d83838" stroke-width="1.2" stroke-linejoin="round"/>
<polygon points="660.0,345.0 668.0,344.0 672.0,347.0 662.0,349.0" fill="#8a5a78"/>
<polygon points="654.0,388.0 668.0,386.0 682.0,390.0 662.0,394.0 650.0,396.0" fill="#8a5a78"/>
<rect x="558" y="144" width="3" height="3" fill="#8a5a78"/>
<polygon points="811.6,41.0 806.0,57.0 810.0,77.0 806.0,84.0 813.0,93.0 826.0,110.0 836.0,120.0 852.0,127.0 862.0,130.0 863.0,133.0 1024.0,133.0 1032.0,125.0 1042.0,110.0 1051.0,98.5 1030.0,98.0 1016.0,95.0 1003.0,84.0 990.0,64.0 980.0,41.0" fill="#d898a8" stroke="#8a4a72" stroke-width="2.4" stroke-linejoin="round"/>
<polygon points="810.3,41.9 846.3,41.9 848.9,81.8 812.9,79.2 808.0,60.0" fill="#c64fd6" stroke="#d83838" stroke-width="1.2" stroke-linejoin="round"/>
<polygon points="846.3,43.0 864.4,48.3 877.2,76.6 866.9,86.9 848.9,81.8" fill="#d8685a" stroke="#d83838" stroke-width="1.2" stroke-linejoin="round"/>
<polygon points="846.3,41.0 897.8,41.0 903.0,50.9 879.8,66.3 864.4,53.4" fill="#a8cc48" stroke="#d83838" stroke-width="1.2" stroke-linejoin="round"/>
<polygon points="866.9,86.9 877.2,68.9 913.3,53.4 915.8,89.5 900.4,92.1 882.4,92.1" fill="#c64fd6" stroke="#d83838" stroke-width="1.2" stroke-linejoin="round"/>
<polygon points="913.3,53.4 921.0,52.2 944.1,66.3 941.6,99.8 921.0,112.6 910.7,89.5" fill="#a8cc48" stroke="#d83838" stroke-width="1.2" stroke-linejoin="round"/>
<polygon points="897.8,41.0 948.0,41.0 949.3,63.7 921.0,52.2 903.0,50.9" fill="#cb9c86" stroke="#d83838" stroke-width="1.2" stroke-linejoin="round"/>
<polygon points="948.0,41.0 980.0,41.0 987.0,56.0 948.0,56.0" fill="#c64fd6" stroke="#d83838" stroke-width="1.2" stroke-linejoin="round"/>
<polygon points="948.0,56.0 987.0,56.0 1000.0,80.0 985.3,104.9 980.2,128.1 964.7,128.1 941.6,99.8 944.1,66.3" fill="#d898a8" stroke="#d83838" stroke-width="1.2" stroke-linejoin="round"/>
<polygon points="985.3,104.9 1000.0,80.0 1003.0,84.0 1016.0,95.0 1011.0,102.0 1011.1,125.5 980.2,128.1" fill="#cb9c86" stroke="#d83838" stroke-width="1.2" stroke-linejoin="round"/>
<polygon points="1011.0,102.0 1016.0,95.0 1030.0,98.0 1051.0,98.5 1042.0,110.0 1032.0,125.0 1024.0,133.0 1005.9,133.0" fill="#c64fd6" stroke="#d83838" stroke-width="1.2" stroke-linejoin="round"/>
<polygon points="877.2,92.1 913.3,92.1 910.7,110.0 897.8,120.4 882.4,120.4" fill="#d898a8" stroke="#d83838" stroke-width="1.2" stroke-linejoin="round"/>
<polygon points="913.3,112.6 944.1,104.9 964.7,128.1 918.4,128.1" fill="#cb9c86" stroke="#d83838" stroke-width="1.2" stroke-linejoin="round"/>
<polygon points="923.6,122.9 964.7,122.9 964.7,133.0 923.6,133.0" fill="#d8685a" stroke="#d83838" stroke-width="1.2" stroke-linejoin="round"/>
<polygon points="826.0,90.0 848.0,86.0 855.0,110.0 836.0,120.0 826.0,110.0" fill="#d8685a" stroke="#d83838" stroke-width="1.2" stroke-linejoin="round"/>
<polygon points="840.0,100.0 860.0,96.0 862.0,118.0 845.0,118.0" fill="#cb9c86" stroke="#d83838" stroke-width="1.2" stroke-linejoin="round"/>
<polygon points="810.0,80.0 822.0,80.0 826.0,93.0 813.0,93.0" fill="#a8cc48" stroke="#d83838" stroke-width="1.2" stroke-linejoin="round"/>
<polygon points="862.0,100.0 870.0,100.0 870.0,116.0 862.0,116.0" fill="#a8cc48" stroke="#d83838" stroke-width="1.2" stroke-linejoin="round"/>
<polygon points="980.0,41.0 992.0,41.0 1003.0,64.0 1016.0,80.0 1024.0,88.0 1031.0,91.0 1030.0,98.0 1016.0,95.0 1003.0,84.0 990.0,64.0" fill="#4aa0e0"/>
<polygon points="992.0,41.0 1044.0,41.0 1049.7,48.3 1062.5,50.9 1060.0,63.7 1047.0,71.5 1031.7,79.2 1024.0,88.0 1016.0,80.0 1003.0,64.0" fill="#cb9c86" stroke="#8a4a72" stroke-width="2.4" stroke-linejoin="round"/>
<polygon points="1044.0,41.0 1104.0,41.0 1100.0,48.0 1062.0,50.0 1049.0,48.0" fill="#d8685a" stroke="#8a4a72" stroke-width="2.4" stroke-linejoin="round"/>
<polygon points="1096.0,41.0 1133.0,41.0 1133.0,105.0 1124.3,107.5 1116.6,94.6 1108.9,74.0 1096.0,53.4" fill="#c64fd6" stroke="#8a4a72" stroke-width="2.4" stroke-linejoin="round"/>
<polygon points="1003.0,41.0 1133.0,41.0 1133.0,133.0 1033.0,133.0 1027.0,113.0" fill="#000" fill-opacity="0.3"/>
<line x1="563.5" y1="41" x2="563.5" y2="400" stroke="#3355dd" stroke-width="1"/>
<line x1="663.5" y1="41" x2="663.5" y2="400" stroke="#3355dd" stroke-width="1"/>
<line x1="763.5" y1="41" x2="763.5" y2="400" stroke="#3355dd" stroke-width="1"/>
<line x1="863.5" y1="41" x2="863.5" y2="400" stroke="#3355dd" stroke-width="1"/>
<line x1="963.5" y1="41" x2="963.5" y2="400" stroke="#3355dd" stroke-width="1"/>
<line x1="1063.5" y1="41" x2="1063.5" y2="400" stroke="#3355dd" stroke-width="1"/>
<line x1="532" y1="262.5" x2="1132" y2="262.5" stroke="#3355dd" stroke-width="1"/>
<line x1="532" y1="382.5" x2="1132" y2="382.5" stroke="#3355dd" stroke-width="1"/>
<line x1="532" y1="142.5" x2="1132" y2="142.5" stroke="#44aaf0" stroke-width="1"/>
<ellipse cx="665" cy="201.5" rx="83" ry="96" fill="none" stroke="#22ee22" stroke-width="1.2" shape-rendering="auto"/>
<path d="M693 41 C690 70 683 115 679 142 C675 170 668 190 664.6 203 C661 225 659 245 656 262 C652 290 645 315 637 333 C628 355 617 380 605 400" fill="none" stroke="#f0e030" stroke-width="1.2" shape-rendering="auto"/>
<circle cx="665" cy="203" r="3" fill="#fff" stroke="#aaa" stroke-width="0.8" shape-rendering="auto"/>
<circle cx="736" cy="225" r="10" fill="#ffff00"/>
</svg>
<div class="t" style="left:673px;top:198px;font-size:11px;color:#fff;text-shadow:1px 1px 0 #222;transform-origin:0 0;transform:scaleX(0.93)">2013-066B</div>
<div class="t" style="left:713px;top:216px;font-size:11px;color:#fff;text-shadow:1px 1px 0 #222;transform-origin:0 0;transform:scaleX(0.999)">+ PY4ZBZ</div>
<svg class="a" style="left:725px;top:215px" width="22" height="22"><polygon points="21.0,10.5 19.5,12.9 19.6,15.8 17.1,17.1 15.8,19.6 12.9,19.5 10.5,21.0 8.1,19.5 5.3,19.6 3.9,17.1 1.4,15.8 1.5,12.9 0.0,10.5 1.5,8.1 1.4,5.3 3.9,3.9 5.2,1.4 8.1,1.5 10.5,0.0 12.9,1.5 15.8,1.4 17.1,3.9 19.6,5.2 19.5,8.1" fill="#ffff00"/></svg>
<div class="t" style="left:548px;top:30px;width:30px;text-align:center;font-size:9px;color:#f0f0f0">90</div>
<div class="t" style="left:648px;top:30px;width:30px;text-align:center;font-size:9px;color:#f0f0f0">60</div>
<div class="t" style="left:748px;top:30px;width:30px;text-align:center;font-size:9px;color:#f0f0f0">30</div>
<div class="t" style="left:798px;top:30px;width:30px;text-align:center;font-size:9px;color:#f0f0f0">O</div>
<div class="t" style="left:848px;top:30px;width:30px;text-align:center;font-size:9px;color:#f0f0f0">0</div>
<div class="t" style="left:898px;top:30px;width:30px;text-align:center;font-size:9px;color:#f0f0f0">L</div>
<div class="t" style="left:948px;top:30px;width:30px;text-align:center;font-size:9px;color:#f0f0f0">30</div>
<div class="t" style="left:1048px;top:30px;width:30px;text-align:center;font-size:9px;color:#f0f0f0">60</div>
<div class="t" style="left:517px;top:78px;width:15px;text-align:center;font-size:9px;color:#e8e8e8">N</div>
<div class="t" style="left:517px;top:138px;width:15px;text-align:center;font-size:9px;color:#e8e8e8">0</div>
<div class="t" style="left:517px;top:198px;width:15px;text-align:center;font-size:9px;color:#e8e8e8">S</div>
<div class="t" style="left:517px;top:258px;width:15px;text-align:center;font-size:9px;color:#e8e8e8">30</div>
<div class="t" style="left:517px;top:378px;width:15px;text-align:center;font-size:9px;color:#e8e8e8">60</div>
<div class="t" style="left:533px;top:403px;font-size:11.5px;color:#fff;transform-origin:0 0;transform:scaleX(0.933)">Sete Lagoas: 44° 15' 15'' O, 19° 27' 09'' S</div>
<div class="t" style="left:900px;top:403px;width:232px;text-align:right;font-size:11.5px;color:#fff;transform-origin:100% 0;transform:scaleX(0.922)">26-11-2013 12:19:47 (UTC -2:00)</div>
<div class="a" style="left:1150px;top:40px;width:157px;height:254px;background:#fff;border:1px solid #828790"></div>
<div class="a" style="left:1153px;top:42px;width:11px;height:11px;border:1px solid #8a8a8a;background:#fff"></div>
<div class="t" style="left:1168px;top:42px;font-size:11.5px;color:#000;letter-spacing:-0.4px;transform-origin:0 0;transform:scaleX(0.972)">2013-064A</div>
<div class="a" style="left:1153px;top:55px;width:11px;height:11px;border:1px solid #8a8a8a;background:#fff"></div>
<div class="t" style="left:1168px;top:55px;font-size:11.5px;color:#000;letter-spacing:-0.4px;transform-origin:0 0;transform:scaleX(0.972)">2013-064B</div>
<div class="a" style="left:1153px;top:68px;width:11px;height:11px;border:1px solid #8a8a8a;background:#fff"></div>
<div class="t" style="left:1168px;top:68px;font-size:11.5px;color:#000;letter-spacing:-0.4px;transform-origin:0 0;transform:scaleX(0.960)">2013-064C</div>
<div class="a" style="left:1153px;top:81px;width:11px;height:11px;border:1px solid #8a8a8a;background:#fff"></div>
<div class="t" style="left:1168px;top:81px;font-size:11.5px;color:#000;letter-spacing:-0.4px;transform-origin:0 0;transform:scaleX(0.960)">2013-064D</div>
<div class="a" style="left:1153px;top:94px;width:11px;height:11px;border:1px solid #8a8a8a;background:#fff"></div>
<div class="a" style="left:1166px;top:93px;width:124px;height:13px;background:#3399ff"></div>
<svg class="a" style="left:1154px;top:95px" width="10" height="10"><path d="M1.5 5 L4 8 L8.5 1.5" stroke="#000" stroke-width="2" fill="none"/></svg>
<div class="t" style="left:1168px;top:94px;font-size:11.5px;color:#fff;transform-origin:0 0;transform:scaleX(0.89)">2013-066B</div>
<div class="a" style="left:1153px;top:107px;width:11px;height:11px;border:1px solid #8a8a8a;background:#fff"></div>
<div class="t" style="left:1168px;top:107px;font-size:11.5px;color:#000;letter-spacing:-0.4px;transform-origin:0 0;transform:scaleX(0.966)">2013-066J</div>
<div class="a" style="left:1153px;top:120px;width:11px;height:11px;border:1px solid #8a8a8a;background:#fff"></div>
<div class="t" style="left:1168px;top:120px;font-size:11.5px;color:#000;letter-spacing:-0.4px;transform-origin:0 0;transform:scaleX(0.960)">2013-066R</div>
<div class="a" style="left:1153px;top:133px;width:11px;height:11px;border:1px solid #8a8a8a;background:#fff"></div>
<div class="t" style="left:1168px;top:133px;font-size:11.5px;color:#000;letter-spacing:-0.4px;transform-origin:0 0;transform:scaleX(0.972)">2013-066S</div>
<div class="a" style="left:1153px;top:146px;width:11px;height:11px;border:1px solid #8a8a8a;background:#fff"></div>
<div class="t" style="left:1168px;top:146px;font-size:11.5px;color:#000;letter-spacing:-0.4px;transform-origin:0 0;transform:scaleX(0.984)">2013-066T</div>
<div class="a" style="left:1291px;top:41px;width:15px;height:252px;background:linear-gradient(90deg,#e8e8e8,#f4f4f4)"></div>
<div class="a" style="left:1291px;top:42px;width:15px;height:16px;background:linear-gradient(90deg,#f2f2f2,#dcdcdc);border:1px solid #b5b5b5;border-radius:2px"></div><svg class="a" style="left:1295px;top:48px" width="8" height="5"><path d="M0 4 L3.5 0.5 L7 4" fill="none" stroke="#555" stroke-width="1.5"/></svg>
<div class="a" style="left:1292px;top:60px;width:14px;height:230px;background:linear-gradient(90deg,#f4f4f4,#d6d6d6);border:1px solid #9a9a9a;border-radius:2px"></div>
<div class="a" style="left:1296px;top:101px;width:6px;height:6px;border-top:1px solid #666;border-bottom:1px solid #666"></div>
<div class="a" style="left:1296px;top:104px;width:6px;height:1px;background:#666"></div>
<div class="a" style="left:1291px;top:277px;width:15px;height:16px;background:linear-gradient(90deg,#f2f2f2,#dcdcdc);border:1px solid #b5b5b5"></div>
<div class="a" style="left:1299px;top:321px;width:8px;height:24px;background:#fff;border:1px solid #aaa"></div>
<div class="a" style="left:1311px;top:30px;width:3px;height:3px;background:#666;border-radius:50%"></div>
<div class="a" style="left:532px;top:422px;width:602px;height:168px;background:#f0f0f0;border:1px solid #a0a0a0;border-right-color:#fff"></div>
<div class="t" style="left:795px;top:444px;font-size:11.5px;font-weight:bold;color:#000;transform-origin:0 0;transform:scaleX(1.05)">2013-066B</div>
<div class="t" style="left:590px;top:468px;font-size:11.5px;color:#000;letter-spacing:-0.2px;transform-origin:0 0;transform:scaleX(0.916)">Azimute</div>
<div class="t" style="left:665px;top:468px;font-size:11.5px;color:#000;letter-spacing:-0.2px;transform-origin:0 0;transform:scaleX(0.993)">Dnlink/MHz</div>
<div class="t" style="left:752px;top:468px;font-size:11.5px;color:#000;letter-spacing:-0.2px;transform-origin:0 0;transform:scaleX(0.997)">Recep./doppler</div>
<div class="t" style="left:848px;top:468px;font-size:11.5px;color:#000;letter-spacing:-0.2px;transform-origin:0 0;transform:scaleX(0.966)">Modo Dnlink</div>
<div class="t" style="left:939px;top:468px;font-size:11.5px;color:#000;letter-spacing:-0.2px;transform-origin:0 0;transform:scaleX(0.937)">Driver</div>
<div class="t" style="left:590px;top:512px;font-size:11.5px;color:#000;letter-spacing:-0.2px;transform-origin:0 0;transform:scaleX(0.978)">Elevação</div>
<div class="t" style="left:665px;top:512px;font-size:11.5px;color:#000;letter-spacing:-0.2px;transform-origin:0 0;transform:scaleX(0.993)">Uplink/MHz</div>
<div class="t" style="left:752px;top:512px;font-size:11.5px;color:#000;letter-spacing:-0.2px;transform-origin:0 0;transform:scaleX(0.959)">Transm./doppler</div>
<div class="t" style="left:848px;top:512px;font-size:11.5px;color:#000;letter-spacing:-0.2px;transform-origin:0 0;transform:scaleX(0.966)">Modo Uplink</div>
<div class="t" style="left:939px;top:512px;font-size:11.5px;color:#000;letter-spacing:-0.2px;transform-origin:0 0;transform:scaleX(0.940)">Dados</div>
<div class="a" style="left:590px;top:481px;width:67px;height:20px;background:#fff;border:2px solid;border-color:#808080 #f8f8f8 #f8f8f8 #808080;box-shadow:inset 1px 1px 0 #404040"></div>
<div class="t" style="left:593px;top:486px;font-size:11.5px;color:#000;font-weight:bold;letter-spacing:-0.2px;transform-origin:0 0;transform:scaleX(1.206)">284.6</div>
<div class="a" style="left:665px;top:481px;width:80px;height:20px;background:#fff;border:2px solid;border-color:#808080 #f8f8f8 #f8f8f8 #808080;box-shadow:inset 1px 1px 0 #404040"></div>
<div class="t" style="left:668px;top:486px;font-size:11.5px;color:#000;letter-spacing:-0.2px;transform-origin:0 0;transform:scaleX(0.987)">145.935000</div>
<div class="a" style="left:727px;top:483px;width:16px;height:16px;background:#ececec;border:1px solid;border-color:#fff #707070 #707070 #fff"></div>
<svg class="a" style="left:731px;top:489px" width="8" height="5"><path d="M0 0 L7 0 L3.5 4 Z" fill="#000"/></svg>
<div class="a" style="left:752px;top:481px;width:87px;height:20px;background:#fff;border:2px solid;border-color:#808080 #f8f8f8 #f8f8f8 #808080;box-shadow:inset 1px 1px 0 #404040"></div>
<div class="t" style="left:755px;top:486px;font-size:11.5px;color:#000;font-weight:bold;letter-spacing:-0.2px;transform-origin:0 0;transform:scaleX(1.140)">145.935428</div>
<div class="a" style="left:848px;top:481px;width:68px;height:20px;background:#fff;border:2px solid;border-color:#808080 #f8f8f8 #f8f8f8 #808080;box-shadow:inset 1px 1px 0 #404040"></div>
<div class="t" style="left:851px;top:486px;font-size:11.5px;color:#000;letter-spacing:-0.2px"></div>
<div class="a" style="left:898px;top:483px;width:16px;height:16px;background:#ececec;border:1px solid;border-color:#fff #707070 #707070 #fff"></div>
<svg class="a" style="left:902px;top:489px" width="8" height="5"><path d="M0 0 L7 0 L3.5 4 Z" fill="#000"/></svg>
<div class="a" style="left:939px;top:481px;width:102px;height:20px;background:#fff;border:2px solid;border-color:#808080 #f8f8f8 #f8f8f8 #808080;box-shadow:inset 1px 1px 0 #404040"></div>
<div class="t" style="left:944px;top:486px;font-size:11.5px;color:#888;letter-spacing:-0.2px;transform-origin:0 0;transform:scaleX(0.947)">Doppler</div>
<div class="a" style="left:1023px;top:483px;width:16px;height:16px;background:#ececec;border:1px solid;border-color:#fff #707070 #707070 #fff"></div>
<svg class="a" style="left:1027px;top:489px" width="8" height="5"><path d="M0 0 L7 0 L3.5 4 Z" fill="#aaa"/></svg>
<div class="a" style="left:590px;top:525px;width:67px;height:20px;background:#fff;border:2px solid;border-color:#808080 #f8f8f8 #f8f8f8 #808080;box-shadow:inset 1px 1px 0 #404040"></div>
<div class="t" style="left:593px;top:530px;font-size:11.5px;color:#000;font-weight:bold;letter-spacing:-0.2px;transform-origin:0 0;transform:scaleX(1.199)">10.9</div>
<div class="a" style="left:665px;top:525px;width:80px;height:20px;background:#fff;border:2px solid;border-color:#808080 #f8f8f8 #f8f8f8 #808080;box-shadow:inset 1px 1px 0 #404040"></div>
<div class="t" style="left:668px;top:530px;font-size:11.5px;color:#000;letter-spacing:-0.2px;transform-origin:0 0;transform:scaleX(0.987)">435.140000</div>
<div class="a" style="left:727px;top:527px;width:16px;height:16px;background:#ececec;border:1px solid;border-color:#fff #707070 #707070 #fff"></div>
<svg class="a" style="left:731px;top:533px" width="8" height="5"><path d="M0 0 L7 0 L3.5 4 Z" fill="#000"/></svg>
<div class="a" style="left:752px;top:525px;width:87px;height:20px;background:#fff;border:2px solid;border-color:#808080 #f8f8f8 #f8f8f8 #808080;box-shadow:inset 1px 1px 0 #404040"></div>
<div class="t" style="left:755px;top:530px;font-size:11.5px;color:#000;font-weight:bold;letter-spacing:-0.2px;transform-origin:0 0;transform:scaleX(1.140)">435.138723</div>
<div class="a" style="left:848px;top:525px;width:68px;height:20px;background:#fff;border:2px solid;border-color:#808080 #f8f8f8 #f8f8f8 #808080;box-shadow:inset 1px 1px 0 #404040"></div>
<div class="t" style="left:851px;top:530px;font-size:11.5px;color:#000;letter-spacing:-0.2px"></div>
<div class="a" style="left:898px;top:527px;width:16px;height:16px;background:#ececec;border:1px solid;border-color:#fff #707070 #707070 #fff"></div>
<svg class="a" style="left:902px;top:533px" width="8" height="5"><path d="M0 0 L7 0 L3.5 4 Z" fill="#000"/></svg>
<div class="a" style="left:939px;top:525px;width:102px;height:20px;background:#fff;border:2px solid;border-color:#808080 #f8f8f8 #f8f8f8 #808080;box-shadow:inset 1px 1px 0 #404040"></div>
<div class="t" style="left:944px;top:530px;font-size:11.5px;color:#000;letter-spacing:-0.2px;transform-origin:0 0;transform:scaleX(0.952)">Satélite</div>
<div class="a" style="left:1023px;top:527px;width:16px;height:16px;background:#ececec;border:1px solid;border-color:#fff #707070 #707070 #fff"></div>
<svg class="a" style="left:1027px;top:533px" width="8" height="5"><path d="M0 0 L7 0 L3.5 4 Z" fill="#000"/></svg>
<div class="a" style="left:927px;top:471px;width:1px;height:76px;background:#a0a0a0;box-shadow:1px 0 0 #fff"></div>
<svg class="a" style="left:1047px;top:481px" width="20" height="20"><rect x="2" y="2" width="9" height="7" fill="#fff" stroke="#000"/><rect x="2" y="2" width="9" height="2" fill="#000"/><rect x="9" y="11" width="9" height="7" fill="#fff" stroke="#000"/><path d="M4 10 L4 15 L8 15" stroke="#000" fill="none"/><path d="M14 3 L17 3 L17 9 M15 5 L17 3" stroke="#000" fill="none"/></svg>
<svg class="a" style="left:1049px;top:527px" width="14" height="17"><path d="M3.5 8 L3.5 5 A3.5 3.5 0 0 1 10.5 5 L10.5 8" stroke="#807000" stroke-width="1.6" fill="none"/><rect x="1" y="8" width="12" height="8" fill="#f0d020" stroke="#806800"/></svg>
<div class="t" style="left:759px;top:558px;font-size:11.5px;color:#000;letter-spacing:-0.2px;transform-origin:0 0;transform:scaleX(0.966)">Escolhe o driver e o executa</div>
<div class="a" style="left:532px;top:589px;width:602px;height:1px;background:#fff"></div>
<div class="a" style="left:536px;top:590px;width:52px;height:16px;background:#000;clip-path:polygon(0 0,100% 0,calc(100% - 4px) 100%,4px 100%)"></div>
<div class="a" style="left:537px;top:590px;width:50px;height:15px;background:#fff;clip-path:polygon(0 0,100% 0,calc(100% - 4px) 100%,4px 100%)"></div>
<div class="t" style="left:542px;top:592px;font-size:11.5px;color:#000;transform-origin:0 0;transform:scaleX(0.891)">Principal</div>
<div class="a" style="left:586px;top:590px;width:68px;height:16px;background:#000;clip-path:polygon(0 0,100% 0,calc(100% - 4px) 100%,4px 100%)"></div>
<div class="a" style="left:587px;top:590px;width:66px;height:15px;background:#fff;clip-path:polygon(0 0,100% 0,calc(100% - 4px) 100%,4px 100%)"></div>
<div class="t" style="left:592px;top:592px;font-size:11.5px;color:#000;transform-origin:0 0;transform:scaleX(0.917)">Visualização</div>
<div class="a" style="left:652px;top:590px;width:68px;height:16px;background:#000;clip-path:polygon(0 0,100% 0,calc(100% - 4px) 100%,4px 100%)"></div>
<div class="a" style="left:653px;top:590px;width:66px;height:15px;background:#fff;clip-path:polygon(0 0,100% 0,calc(100% - 4px) 100%,4px 100%)"></div>
<div class="t" style="left:658px;top:592px;font-size:11.5px;color:#000;transform-origin:0 0;transform:scaleX(0.929)">Localização</div>
<div class="a" style="left:718px;top:590px;width:67px;height:16px;background:#000;clip-path:polygon(0 0,100% 0,calc(100% - 4px) 100%,4px 100%)"></div>
<div class="a" style="left:719px;top:590px;width:65px;height:15px;background:#fff;clip-path:polygon(0 0,100% 0,calc(100% - 4px) 100%,4px 100%)"></div>
<div class="t" style="left:724px;top:592px;font-size:11.5px;color:#000;transform-origin:0 0;transform:scaleX(0.949)">Inf. Sat/Orb</div>
<div class="a" style="left:783px;top:590px;width:85px;height:16px;background:#000;clip-path:polygon(0 0,100% 0,calc(100% - 4px) 100%,4px 100%)"></div>
<div class="a" style="left:784px;top:590px;width:83px;height:15px;background:#fff;clip-path:polygon(0 0,100% 0,calc(100% - 4px) 100%,4px 100%)"></div>
<div class="t" style="left:789px;top:592px;font-size:11.5px;color:#000;transform-origin:0 0;transform:scaleX(0.914)">Conf. previsões</div>
<div class="a" style="left:866px;top:590px;width:57px;height:16px;background:#000;clip-path:polygon(0 0,100% 0,calc(100% - 4px) 100%,4px 100%)"></div>
<div class="a" style="left:867px;top:590px;width:55px;height:15px;background:#fff;clip-path:polygon(0 0,100% 0,calc(100% - 4px) 100%,4px 100%)"></div>
<div class="t" style="left:872px;top:592px;font-size:11.5px;color:#000;transform-origin:0 0;transform:scaleX(0.885)">Previsões</div>
<div class="a" style="left:921px;top:589px;width:69px;height:18px;background:#f0f0f0;clip-path:polygon(0 0,100% 0,calc(100% - 4px) 100%,4px 100%)"></div>
<div class="t" style="left:927px;top:592px;font-size:11.5px;color:#000;transform-origin:0 0;transform:scaleX(0.945)">Rotor/Radio</div>
<div class="a" style="left:988px;top:590px;width:40px;height:16px;background:#000;clip-path:polygon(0 0,100% 0,calc(100% - 4px) 100%,4px 100%)"></div>
<div class="a" style="left:989px;top:590px;width:38px;height:15px;background:#fff;clip-path:polygon(0 0,100% 0,calc(100% - 4px) 100%,4px 100%)"></div>
<div class="t" style="left:994px;top:592px;font-size:11.5px;color:#000;transform-origin:0 0;transform:scaleX(0.890)">Sobre</div>
<div class="a" style="left:1108px;top:590px;width:18px;height:16px;background:#fff;clip-path:polygon(0 0,100% 0,calc(100% - 4px) 100%,4px 100%)"></div>
<div class="t" style="left:1112px;top:592px;font-size:11.5px;color:#000;">?</div>
<div class="a" style="left:517px;top:610px;width:800px;height:15px;background:#3c3c3c"></div>
<div class="t" style="left:717px;top:612px;width:400px;text-align:center;font-size:11.5px;color:#e8e8e8;letter-spacing:-0.2px;transform-origin:50% 0;transform:scaleX(0.945)">Orbitron 3.71 - (C) 2001-2005 by Sebastian Stoff</div>
<div class="a" style="left:1150px;top:360px;width:158px;height:81px;border:1px solid #ccc"></div>
<div class="a" style="left:1150px;top:376px;width:157px;height:1px;background:#ccc"></div>
<div class="a" style="left:1190px;top:361px;width:1px;height:15px;background:#ccc"></div>
<div class="a" style="left:1268px;top:361px;width:1px;height:15px;background:#ccc"></div>
<div class="t" style="left:1150px;top:364px;width:40px;text-align:center;font-size:10.5px;font-weight:bold;color:#e00000">TReal</div>
<div class="t" style="left:1191px;top:364px;width:77px;text-align:center;font-size:10.5px;font-weight:bold;color:#e00000">RELÓG.</div>
<div class="t" style="left:1269px;top:364px;width:38px;text-align:center;font-size:10.5px;font-weight:bold;color:#e00000">LOC</div>
<div class="t" style="left:1150px;top:385px;width:157px;text-align:center;font-size:23px;color:#00e000">12:19:47</div>
<div class="t" style="left:1150px;top:412px;width:157px;text-align:center;font-size:23px;color:#00e000;transform:scaleX(1.03)">26-11-2013</div>
<svg class="a" style="left:1148px;top:448px" width="162" height="162" viewBox="1148 448 162 162">
<defs><radialGradient id="rg" cx="50%" cy="50%" r="50%"><stop offset="0" stop-color="#1a1a24"/><stop offset="1" stop-color="#000"/></radialGradient></defs>
<circle cx="1228.5" cy="527.5" r="76" fill="url(#rg)"/>
<g fill="#4a482c"><polygon points="1229.7,492.5 1252.7,469.5 1286.4,485.4 1263.3,510.2"/><polygon points="1165.9,520.8 1217.3,517.3 1190.7,554.5 1166.8,555.4"/><circle cx="1226" cy="526" r="21"/><polygon points="1208,508 1236,496 1248,530 1232,548 1210,546"/></g>
<line x1="1204" y1="477.4" x2="1219" y2="501.4" stroke="#4a482c" stroke-width="3"/><circle cx="1204" cy="477" r="3.2" fill="#4a482c"/>
<path d="M1212 512 Q1230 500 1245 515" fill="none" stroke="#111" stroke-width="2"/><path d="M1210 540 Q1228 552 1248 538" fill="none" stroke="#111" stroke-width="1.6"/>
<path d="M1170 560 Q1228 600 1290 540" fill="none" stroke="#2a2a44" stroke-width="2" opacity="0.7"/><path d="M1180 480 Q1228 455 1280 490" fill="none" stroke="#2a2a44" stroke-width="2" opacity="0.7"/>
<circle cx="1228.5" cy="527.5" r="75" fill="none" stroke="#b8b8b8" stroke-width="1"/>
<circle cx="1228.5" cy="527.5" r="62.5" fill="none" stroke="#a8a8a8" stroke-width="1"/>
<circle cx="1228.5" cy="527.5" r="50" fill="none" stroke="#b0b0b0" stroke-width="1"/>
<circle cx="1228.5" cy="527.5" r="37.5" fill="none" stroke="#a0a0a0" stroke-width="1"/>
<circle cx="1228.5" cy="527.5" r="25" fill="none" stroke="#a8a8a8" stroke-width="1"/>
<circle cx="1228.5" cy="527.5" r="12.5" fill="none" stroke="#666" stroke-width="1"/>
<line x1="1153" y1="527.5" x2="1304" y2="527.5" stroke="#b0b0b0" stroke-width="1"/>
<line x1="1228.5" y1="452" x2="1228.5" y2="603" stroke="#b0b0b0" stroke-width="1"/>
<text x="1199" y="566" font-family="Liberation Serif" font-style="italic" font-weight="bold" font-size="23" fill="#4a1a1c" fill-opacity="0.9" textLength="92">Orbitron</text>
<path d="M1194.5 461 Q1175 478 1167 502 Q1162 530 1165 550 Q1169 570 1178.5 581" fill="none" stroke="#f0e020" stroke-width="1.2"/>
<rect x="1161.5" y="506.5" width="7" height="7" fill="#f0e020" stroke="#f0e020"/>
<rect x="1163" y="508" width="4" height="4" fill="#c8b800"/>
</svg>
<div class="t" style="left:1173px;top:505px;font-size:9.5px;color:#fff;transform-origin:0 0;transform:scaleX(0.92)">2013-066B</div>
<!--/ORB-->
<!--DOP-->
<div class="a" style="left:821px;top:133px;width:478px;height:219px;background:linear-gradient(#b9cde6,#cfdff0 24px,#d6e4f2);border:1px solid #6c7c8c;border-radius:6px 6px 0 0"></div>
<div class="a" style="left:825px;top:137px;width:16px;height:16px;background:#000"><svg width="16" height="16"><path d="M5 3 L9 8 M1 9 L8 8" stroke="#ff4400" stroke-width="1.2"/><polygon points="8,7 15,4 12,10" fill="#ffcc00" stroke="#ff6600" stroke-width="0.8"/><polygon points="8,9 1,14 5,8" fill="#ffdd00" stroke="#ff6600" stroke-width="0.8"/><polygon points="7,4 11,3 9,7" fill="#ff8800"/><circle cx="9" cy="9" r="2.8" fill="#ffee00"/><polygon points="9,11 13,13 10,14" fill="#ff8800"/></svg></div>
<div class="t" style="left:845px;top:139px;font-size:12.5px;color:#5a5a5a;transform-origin:0 0;transform:scaleX(0.935)">Doppler control for Orbitron&nbsp;&nbsp; 1.1&nbsp;&nbsp;&nbsp;&nbsp;&nbsp;&nbsp; by&nbsp; PY4ZBZ</div>
<div class="a" style="left:1197px;top:137px;width:30px;height:17px;border:1px solid #6f7d90;border-radius:3px;background:linear-gradient(#e6eef8,#c5d4e6 50%,#b3c6de 51%,#c9daee)"><div class="a" style="left:9px;top:9px;width:11px;height:4px;background:#fff;border:1px solid #3a4a5a"></div></div>
<div class="a" style="left:1230px;top:137px;width:30px;height:17px;border:1px solid #6f7d90;border-radius:3px;background:linear-gradient(#e6eef8,#c5d4e6 50%,#b3c6de 51%,#c9daee)"><div class="a" style="left:10px;top:4px;width:10px;height:8px;border:1.5px solid #3a4a5a;border-top-width:2.5px;background:#e8eef6;box-shadow:0 0 0 1px #f4f8fc"></div></div>
<div class="a" style="left:1263px;top:137px;width:30px;height:17px;border:1px solid #6f7d90;border-radius:3px;background:linear-gradient(#e6eef8,#c5d4e6 50%,#b3c6de 51%,#c9daee)"><svg class="a" style="left:8px;top:3px" width="14" height="10"><path d="M3 1 L11 9 M11 1 L3 9" stroke="#3a4a5a" stroke-width="3.4"/><path d="M3 1 L11 9 M11 1 L3 9" stroke="#fff" stroke-width="1.4"/></svg></div>
<div class="a" style="left:823px;top:157px;width:473px;height:193px;background:#000"></div>
<div class="a" style="left:831px;top:165px;width:457px;height:40px;background:#f0f0f0;border:1px solid;border-color:#fff #a0a0a0 #a0a0a0 #fff;box-shadow:inset -1px -1px 0 #d0d0d0"></div>
<div class="a" style="left:831px;top:213px;width:457px;height:128px;background:#f0f0f0;border:1px solid;border-color:#fff #a0a0a0 #a0a0a0 #fff;box-shadow:inset -1px -1px 0 #d0d0d0"></div>
<div class="t" style="left:852px;top:177px;font-size:13px;color:#000;font-weight:bold;transform-origin:0 0;transform:scaleX(1.007)">Az.:</div>
<div class="t" style="left:880px;top:177px;font-size:13px;color:#0000e0;font-weight:bold;transform-origin:0 0;transform:scaleX(1.060)">284.6°</div>
<div class="t" style="left:1023px;top:177px;font-size:13px;color:#0000e0;font-weight:bold;transform-origin:0 0;transform:scaleX(1.08)">2013-066B</div>
<div class="t" style="left:1205px;top:177px;font-size:13px;color:#000;font-weight:bold;transform-origin:0 0;transform:scaleX(1.058)">El.:</div>
<div class="t" style="left:1231px;top:177px;font-size:13px;color:#0000e0;font-weight:bold;transform-origin:0 0;transform:scaleX(1.065)">10.9°</div>
<div class="a" style="left:847px;top:229px;width:81px;height:22px;background:#f0f0f0;border:1px solid;border-color:#fff #404040 #404040 #fff;box-shadow:inset -1px -1px 0 #a0a0a0"></div><div class="t" style="left:847px;top:235.0px;width:81px;text-align:center;font-size:11.5px;color:#000;transform-origin:50% 0;transform:scaleX(0.898)">Com Port</div>
<div class="a" style="left:847px;top:293px;width:81px;height:22px;background:#f0f0f0;border:1px solid;border-color:#fff #404040 #404040 #fff;box-shadow:inset -1px -1px 0 #a0a0a0"></div><div class="t" style="left:847px;top:299.0px;width:81px;text-align:center;font-size:11.5px;color:#000;transform-origin:50% 0;transform:scaleX(0.936)">Open / Close</div>
<svg class="a" style="left:875px;top:265px" width="17" height="17"><circle cx="8.5" cy="8.5" r="7.3" fill="#e8e8e8" stroke="#303030" stroke-width="1.2"/><circle cx="8.5" cy="8.5" r="5.2" fill="#d8d8d8" stroke="#404040" stroke-width="1"/><circle cx="8.5" cy="8.5" r="3.6" fill="#20d020" stroke="#105010" stroke-width="0.8"/><circle cx="7.6" cy="7.6" r="1.2" fill="#a0ffa0"/></svg>
<div class="t" style="left:959px;top:222px;font-size:11.5px;color:#000;letter-spacing:-0.3px;transform-origin:0 0;transform:scaleX(0.971)">RX freq. from Orbitron =&nbsp;&nbsp; 145935428 Hz</div>
<div class="a" style="left:951px;top:247px;width:201px;height:39px;background:#000"></div>
<div class="t" style="left:951px;top:250px;width:201px;text-align:center;font-size:34px;color:#00e000">145.935.82</div>
<div class="a" style="left:959px;top:298px;width:22px;height:21px;background:#f0f0f0;border:1px solid;border-color:#fff #404040 #404040 #fff;box-shadow:inset -1px -1px 0 #a0a0a0"></div><div class="t" style="left:959px;top:303.0px;width:22px;text-align:center;font-size:11.5px;color:#000">0</div>
<div class="t" style="left:991px;top:302px;font-size:11.5px;color:#000;letter-spacing:-0.3px;transform-origin:0 0;transform:scaleX(0.964)">Delta f (Hz) =&nbsp;&nbsp;&nbsp; 400</div>
<div class="a" style="left:1095px;top:293px;width:24px;height:16px;background:#f0f0f0;border:1px solid;border-color:#fff #404040 #404040 #fff;box-shadow:inset -1px -1px 0 #a0a0a0"></div>
<svg class="a" style="left:1103px;top:298px" width="9" height="6"><path d="M0 5 L8 5 L4 0 Z" fill="#000"/></svg>
<div class="a" style="left:1095px;top:309px;width:24px;height:16px;background:#f0f0f0;border:1px solid;border-color:#fff #404040 #404040 #fff;box-shadow:inset -1px -1px 0 #a0a0a0"></div>
<svg class="a" style="left:1103px;top:314px" width="9" height="6"><path d="M0 0 L8 0 L4 5 Z" fill="#000"/></svg>
<div class="a" style="left:1119px;top:293px;width:24px;height:16px;background:#f0f0f0;border:1px solid;border-color:#fff #404040 #404040 #fff;box-shadow:inset -1px -1px 0 #a0a0a0"></div>
<svg class="a" style="left:1127px;top:298px" width="9" height="6"><path d="M0 5 L8 5 L4 0 Z" fill="#000"/></svg>
<div class="a" style="left:1119px;top:309px;width:24px;height:16px;background:#f0f0f0;border:1px solid;border-color:#fff #404040 #404040 #fff;box-shadow:inset -1px -1px 0 #a0a0a0"></div>
<svg class="a" style="left:1127px;top:314px" width="9" height="6"><path d="M0 0 L8 0 L4 5 Z" fill="#000"/></svg>
<div class="a" style="left:1184px;top:227px;width:87px;height:66px;border:1px solid;border-color:#a0a0a0 #fff #fff #a0a0a0;box-shadow:inset 1px 1px 0 #fff, 1px 1px 0 #a0a0a0"></div>
<div class="a" style="left:1189px;top:222px;width:32px;height:12px;background:#f0f0f0"></div>
<div class="t" style="left:1191px;top:222px;font-size:11.5px;color:#000;letter-spacing:-0.3px;transform-origin:0 0;transform:scaleX(0.970)">Radio</div>
<div class="a" style="left:1191px;top:242px;width:12px;height:12px;border-radius:50%;background:radial-gradient(circle,#fff 40%,#e0e0e0);border:1px solid #909090"></div>
<div class="a" style="left:1195px;top:246px;width:4px;height:4px;border-radius:50%;background:#000"></div>
<div class="t" style="left:1209px;top:242px;font-size:11.5px;color:#000;letter-spacing:-0.3px;transform-origin:0 0;transform:scaleX(0.962)">FT-100D</div>
<div class="a" style="left:1191px;top:269px;width:12px;height:12px;border-radius:50%;background:radial-gradient(circle,#fff 40%,#e0e0e0);border:1px solid #909090"></div>
<div class="t" style="left:1209px;top:269px;font-size:11.5px;color:#000;letter-spacing:-0.3px;transform-origin:0 0;transform:scaleX(0.962)">FT-857D</div>
<div class="a" style="left:1188px;top:301px;width:18px;height:20px;background:#f0f0f0;border:1px solid;border-color:#fff #404040 #404040 #fff;box-shadow:inset -1px -1px 0 #a0a0a0"></div><div class="t" style="left:1188px;top:306.0px;width:18px;text-align:center;font-size:11.5px;color:#888">T</div>
<div class="a" style="left:1223px;top:301px;width:13px;height:17px;background:#ff0000"></div>
<div class="a" style="left:1248px;top:301px;width:17px;height:20px;background:#f0f0f0;border:1px solid;border-color:#fff #404040 #404040 #fff;box-shadow:inset -1px -1px 0 #a0a0a0"></div><div class="t" style="left:1248px;top:306.0px;width:17px;text-align:center;font-size:11.5px;color:#000">?</div>
<!--/DOP-->
</body></html>
